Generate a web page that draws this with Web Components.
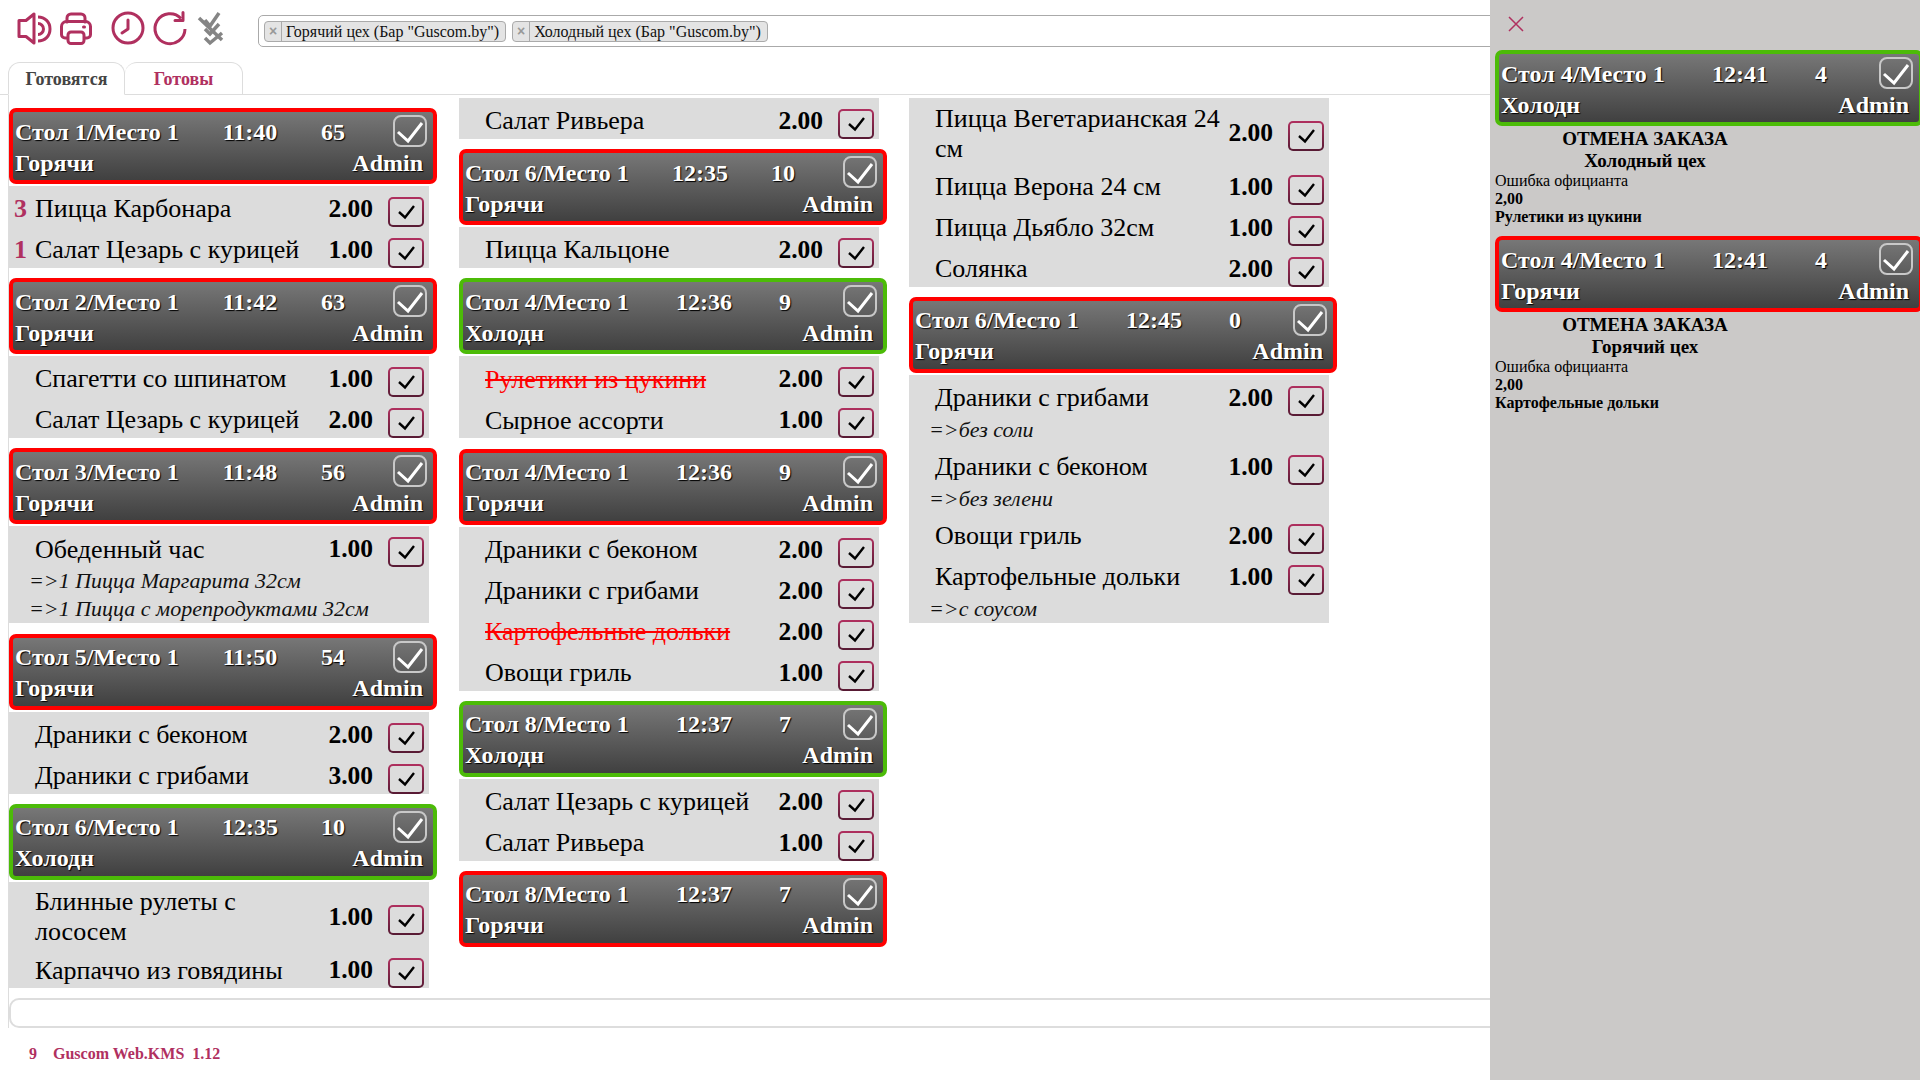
<!DOCTYPE html>
<html lang="ru">
<head>
<meta charset="utf-8">
<title>Guscom Web.KMS</title>
<style>
  html, body { height: 100%; }
  body {
    margin: 0;
    overflow: hidden;
    background: #fff;
    font-family: "Liberation Serif", "Times New Roman", serif;
  }
  .col { display: flex; flex-direction: column; width: 428px; }
  .col.first { padding-top: 10px; }
</style>
</head>
<body>

<kms-page>
  <kms-toolbar slot="toolbar">
    <kms-tag>Горячий цех (Бар "Guscom.by")</kms-tag>
    <kms-tag>Холодный цех (Бар "Guscom.by")</kms-tag>
  </kms-toolbar>

  <kms-tabs slot="tabs"></kms-tabs>

  <div class="col first" slot="columns">
    <order-head place="Стол 1/Место 1" time="11:40" count="65" shop="Горячи"></order-head>
    <order-items>
      <order-item qty="3" price="2.00">Пицца Карбонара</order-item>
      <order-item qty="1" price="1.00">Салат Цезарь с курицей</order-item>
    </order-items>
    <order-head place="Стол 2/Место 1" time="11:42" count="63" shop="Горячи"></order-head>
    <order-items>
      <order-item price="1.00">Спагетти со шпинатом</order-item>
      <order-item price="2.00">Салат Цезарь с курицей</order-item>
    </order-items>
    <order-head place="Стол 3/Место 1" time="11:48" count="56" shop="Горячи"></order-head>
    <order-items>
      <order-item price="1.00">Обеденный час</order-item>
      <item-note>=&gt;1 Пицца Маргарита 32см</item-note>
      <item-note>=&gt;1 Пицца с морепродуктами 32см</item-note>
    </order-items>
    <order-head place="Стол 5/Место 1" time="11:50" count="54" shop="Горячи"></order-head>
    <order-items>
      <order-item price="2.00">Драники с беконом</order-item>
      <order-item price="3.00">Драники с грибами</order-item>
    </order-items>
    <order-head place="Стол 6/Место 1" time="12:35" count="10" shop="Холодн" cold></order-head>
    <order-items>
      <order-item price="1.00">Блинные рулеты с лососем</order-item>
      <order-item price="1.00">Карпаччо из говядины</order-item>
    </order-items>
  </div>

  <div class="col" slot="columns">
    <order-items>
      <order-item price="2.00">Салат Ривьера</order-item>
    </order-items>
    <order-head place="Стол 6/Место 1" time="12:35" count="10" shop="Горячи"></order-head>
    <order-items>
      <order-item price="2.00">Пицца Кальцоне</order-item>
    </order-items>
    <order-head place="Стол 4/Место 1" time="12:36" count="9" shop="Холодн" cold></order-head>
    <order-items>
      <order-item price="2.00" void>Рулетики из цукини</order-item>
      <order-item price="1.00">Сырное ассорти</order-item>
    </order-items>
    <order-head place="Стол 4/Место 1" time="12:36" count="9" shop="Горячи"></order-head>
    <order-items>
      <order-item price="2.00">Драники с беконом</order-item>
      <order-item price="2.00">Драники с грибами</order-item>
      <order-item price="2.00" void>Картофельные дольки</order-item>
      <order-item price="1.00">Овощи гриль</order-item>
    </order-items>
    <order-head place="Стол 8/Место 1" time="12:37" count="7" shop="Холодн" cold></order-head>
    <order-items>
      <order-item price="2.00">Салат Цезарь с курицей</order-item>
      <order-item price="1.00">Салат Ривьера</order-item>
    </order-items>
    <order-head place="Стол 8/Место 1" time="12:37" count="7" shop="Горячи"></order-head>
  </div>

  <div class="col" slot="columns">
    <order-items>
      <order-item price="2.00">Пицца Вегетарианская 24 см</order-item>
      <order-item price="1.00">Пицца Верона 24 см</order-item>
      <order-item price="1.00">Пицца Дьябло 32см</order-item>
      <order-item price="2.00">Солянка</order-item>
    </order-items>
    <order-head place="Стол 6/Место 1" time="12:45" count="0" shop="Горячи"></order-head>
    <order-items>
      <order-item price="2.00">Драники с грибами</order-item>
      <item-note>=&gt;без соли</item-note>
      <order-item price="1.00">Драники с беконом</order-item>
      <item-note>=&gt;без зелени</item-note>
      <order-item price="2.00">Овощи гриль</order-item>
      <order-item price="1.00">Картофельные дольки</order-item>
      <item-note>=&gt;с соусом</item-note>
    </order-items>
  </div>

  <kms-footer slot="footer" count="9" version="Guscom Web.KMS&nbsp;&nbsp;1.12"></kms-footer>

  <kms-drawer slot="drawer">
    <order-head place="Стол 4/Место 1" time="12:41" count="4" shop="Холодн" cold></order-head>
    <cancel-note shop="Холодный цех" reason="Ошибка официанта" amount="2,00" dish="Рулетики из цукини"></cancel-note>
    <order-head place="Стол 4/Место 1" time="12:41" count="4" shop="Горячи"></order-head>
    <cancel-note shop="Горячий цех" reason="Ошибка официанта" amount="2,00" dish="Картофельные дольки"></cancel-note>
  </kms-drawer>
</kms-page>

<script>
  const CRIMSON = '#b0305f';

  class KmsPage extends HTMLElement {
    constructor() {
      super();
      this.attachShadow({ mode: 'open' }).innerHTML = `
        <style>
          :host { display: flex; flex-direction: column; height: 1080px; position: relative; overflow: hidden; }
          .panel {
            flex: none;
            height: 933px;
            margin-left: 8px;
            border-left: 1px solid #ddd;
            display: flex;
            flex-direction: column;
          }
          .columns { flex: 1; display: flex; gap: 22px; min-height: 0; padding-top: 3px; }
          .box {
            flex: none;
            height: 26px;
            border: 2px solid #ddd;
            border-radius: 10px;
            margin-right: -40px;
          }
        </style>
        <slot name="toolbar"></slot>
        <slot name="tabs"></slot>
        <div class="panel">
          <div class="columns"><slot name="columns"></slot></div>
          <div class="box"></div>
        </div>
        <slot name="footer"></slot>
        <slot name="drawer"></slot>`;
    }
  }

  class KmsToolbar extends HTMLElement {
    constructor() {
      super();
      this.attachShadow({ mode: 'open' }).innerHTML = `
        <style>
          :host { display: flex; height: 62px; flex: none; }
          svg { display: block; flex: none; }
          .tags {
            position: absolute;
            left: 258px; top: 15px;
            width: 1630px; height: 30px;
            border: 1px solid #aaa;
            border-radius: 5px;
            display: flex;
            align-items: center;
            gap: 6px;
            padding-left: 5px;
            box-sizing: content-box;
          }
        </style>
        <svg width="240" height="62" viewBox="0 0 240 62" fill="none" stroke="${CRIMSON}" stroke-width="3" stroke-linecap="round" stroke-linejoin="round">
          <path d="M19 20.5h7l8-6.500v29l-8-6.500h-7z"/>
          <path d="M38 17c7 0 12 5 12 12s-5 12-12 12" stroke-linecap="butt"/>
          <path d="M38 23.500c3 0 5.500 2.500 5.500 5.500s-2.500 5.500-5.500 5.500" stroke-linecap="butt"/>

          <path d="M67 22v-4a4 4 0 0 1 4-4h10a4 4 0 0 1 4 4v4"/>
          <path d="M67 38h-2a3.500 3.500 0 0 1-3.500-3.500v-8a5 5 0 0 1 5-5h19a5 5 0 0 1 5 5v8a3.500 3.500 0 0 1-3.500 3.500h-2"/>
          <rect x="68" y="32" width="16" height="11.500" rx="3"/>
          <path d="M83.500 27h1"/>

          <circle cx="128" cy="28" r="15"/>
          <path d="M128 20v9l-6 4"/>

          <path d="M185 29a15 15 0 1 1-4-10.500" stroke-linecap="butt"/>
          <path d="M183 12.500v8h-8"/>

          <g stroke="#858585" stroke-width="3.500" stroke-linecap="butt" stroke-linejoin="miter">
            <path d="M199 18l23 22"/>
            <path d="M205 20l5 6 9-13"/>
            <path d="M205 29l5 5 9-10"/>
            <path d="M205 38l5 5 12-10"/>
          </g>
        </svg>
        <div class="tags"><slot></slot></div>`;
    }
  }

  class KmsTag extends HTMLElement {
    constructor() {
      super();
      this.attachShadow({ mode: 'open' }).innerHTML = `
        <style>
          :host {
            display: flex;
            height: 19px;
            border: 1px solid #aaa;
            border-radius: 4px;
            background: #e4e4e4;
            font-size: 16px;
            line-height: 19px;
            color: #111;
          }
          b {
            width: 16px;
            border-right: 1px solid #aaa;
            color: #999;
            font: bold 14px/18px "Liberation Sans", sans-serif;
            text-align: center;
          }
          span { padding: 0 6px 0 4px; white-space: nowrap; }
        </style>
        <b>×</b><span><slot></slot></span>`;
    }
  }

  class KmsTabs extends HTMLElement {
    constructor() {
      super();
      this.attachShadow({ mode: 'open' }).innerHTML = `
        <style>
          :host {
            display: flex;
            height: 33px;
            flex: none;
            box-sizing: border-box;
            padding-left: 8px;
            border-bottom: 1px solid #ddd;
            font-weight: bold;
            font-size: 18px;
          }
          div {
            box-sizing: border-box;
            height: 33px;
            width: 117px;
            border: 1px solid #ddd;
            border-radius: 12px 12px 0 0;
            text-align: center;
            line-height: 32px;
          }
          .on { color: #444; background: #fff; border-bottom-color: #fff; }
          .off { color: ${CRIMSON}; width: 118px; border-left: 0; }
        </style>
        <div class="on">Готовятся</div>
        <div class="off">Готовы</div>`;
    }
  }

  class OrderHead extends HTMLElement {
    constructor() {
      super();
      const wide = (this.getAttribute('count') || '').length > 1;
      this.attachShadow({ mode: 'open' }).innerHTML = `
        <style>
          :host {
            display: block;
            flex: none;
            width: 428px;
            height: 76px;
            margin-bottom: 2px;
            box-sizing: border-box;
            border: 4px solid #f00;
            border-radius: 7px;
            background: linear-gradient(#777, #404040);
            color: #fff;
            font-weight: bold;
            font-size: 24px;
            line-height: 30px;
            text-shadow: 1px 1px 1px #000;
            padding: 4.500px 6px 0 2px;
          }
          :host([cold]) { border-color: #4cbb08; }
          .top {
            display: grid;
            grid-template-columns: ${wide ? 198 : 202}px 74px 1fr 34px;
            height: 31px;
          }
          .mid { text-align: center; }
          .count { padding-right: 14px; }
          .tick {
            box-sizing: border-box;
            width: 34px;
            height: 32px;
            margin-top: -1.500px;
            border: 2px solid #c8c8c8;
            border-radius: 8px;
          }
          .tick svg { display: block; margin: -2px; }
          .bottom { display: flex; justify-content: space-between; padding-right: 4px; }
        </style>
        <div class="top">
          <span>${this.getAttribute('place')}</span>
          <span class="mid">${this.getAttribute('time')}</span>
          <span class="mid count">${this.getAttribute('count')}</span>
          <div class="tick">
            <svg width="34" height="32" viewBox="0 0 34 32" fill="none" stroke="#fff" stroke-width="3">
              <path d="M5 17l10 9L29 8"/>
            </svg>
          </div>
        </div>
        <div class="bottom"><span>${this.getAttribute('shop')}</span><span>Admin</span></div>`;
    }
  }

  class OrderItems extends HTMLElement {
    constructor() {
      super();
      this.attachShadow({ mode: 'open' }).innerHTML = `
        <style>
          :host {
            display: block;
            width: 420px;
            margin-bottom: 10.200px;
            background: #dcdcdc;
            color: #000;
          }
        </style>
        <slot></slot>`;
    }
  }

  class OrderItem extends HTMLElement {
    constructor() {
      super();
      this.attachShadow({ mode: 'open' }).innerHTML = `
        <style>
          :host {
            display: grid;
            grid-template-columns: 26px 290px 48px 51px;
            align-items: center;
            min-height: 41px;
            padding-right: 5px;
            font-size: 26px;
            line-height: 30px;
          }
          .qty { color: ${CRIMSON}; font-weight: bold; text-align: right; padding-right: 8px; padding-top: 5.500px; }
          .name { padding-top: 5.500px; }
          :host([void]) .name { color: #f00; text-decoration: line-through; }
          .price { font-weight: bold; font-size: 25.500px; text-align: right; height: 41px; padding-top: 8px; box-sizing: border-box; }
          .check { height: 41px; padding-left: 15px; box-sizing: border-box; padding-top: 11px; }
          .box {
            box-sizing: border-box;
            width: 36px;
            height: 30px;
            border: 2px solid transparent;
            border-radius: 5px;
            background: linear-gradient(#dcdcdc, #dcdcdc) padding-box, linear-gradient(${CRIMSON}, #561a33) border-box;
          }
          svg { display: block; margin: -2px; }
        </style>
        <span class="qty">${this.getAttribute('qty') || ''}</span>
        <span class="name"><slot></slot></span>
        <span class="price">${this.getAttribute('price')}</span>
        <div class="check"><div class="box">
          <svg width="36" height="30" viewBox="0 0 36 30" fill="none" stroke="#000" stroke-width="2.400">
            <path d="M11 15l6 5.500L26 9"/>
          </svg>
        </div></div>`;
    }
  }

  class ItemNote extends HTMLElement {
    constructor() {
      super();
      this.attachShadow({ mode: 'open' }).innerHTML = `
        <style>
          :host {
            display: block;
            height: 28px;
            padding-left: 20px;
            font-style: italic;
            font-size: 22px;
            line-height: 28px;
            color: #111;
          }
        </style>
        <slot></slot>`;
    }
  }

  class KmsFooter extends HTMLElement {
    constructor() {
      super();
      this.attachShadow({ mode: 'open' }).innerHTML = `
        <style>
          :host {
            display: flex;
            padding: 16px 0 0 29px;
            gap: 16px;
            color: ${CRIMSON};
            font-weight: bold;
            font-size: 16px;
            line-height: 20px;
          }
        </style>
        <span>${this.getAttribute('count')}</span><span>${this.getAttribute('version')}</span>`;
    }
  }

  class KmsDrawer extends HTMLElement {
    constructor() {
      super();
      this.attachShadow({ mode: 'open' }).innerHTML = `
        <style>
          :host {
            position: absolute;
            top: 0; right: 0; bottom: 0;
            width: 430px;
            box-sizing: border-box;
            padding: 50px 0 0 5px;
            background: #cbc9c8;
            overflow: hidden;
          }
          svg { position: absolute; left: 18px; top: 16px; }
        </style>
        <svg width="16" height="16" viewBox="0 0 16 16" fill="none" stroke="${CRIMSON}" stroke-width="1.500">
          <path d="M1 1l14 14M15 1L1 15"/>
        </svg>
        <slot></slot>`;
    }
  }

  class CancelNote extends HTMLElement {
    constructor() {
      super();
      this.attachShadow({ mode: 'open' }).innerHTML = `
        <style>
          :host { display: block; color: #000; height: 108px; font-size: 16px; line-height: 18px; }
          .title { width: 300px; text-align: center; font-weight: bold; font-size: 19px; line-height: 22px; }
          .strong { font-weight: bold; }
          .amount { font-weight: bold; }
        </style>
        <div class="title">ОТМЕНА ЗАКАЗА</div>
        <div class="title">${this.getAttribute('shop')}</div>
        <div>${this.getAttribute('reason')}</div>
        <div class="amount">${this.getAttribute('amount')}</div>
        <div class="strong">${this.getAttribute('dish')}</div>`;
    }
  }

  customElements.define('kms-page', KmsPage);
  customElements.define('kms-toolbar', KmsToolbar);
  customElements.define('kms-tag', KmsTag);
  customElements.define('kms-tabs', KmsTabs);
  customElements.define('order-head', OrderHead);
  customElements.define('order-items', OrderItems);
  customElements.define('order-item', OrderItem);
  customElements.define('item-note', ItemNote);
  customElements.define('kms-footer', KmsFooter);
  customElements.define('kms-drawer', KmsDrawer);
  customElements.define('cancel-note', CancelNote);
</script>
</body>
</html>
